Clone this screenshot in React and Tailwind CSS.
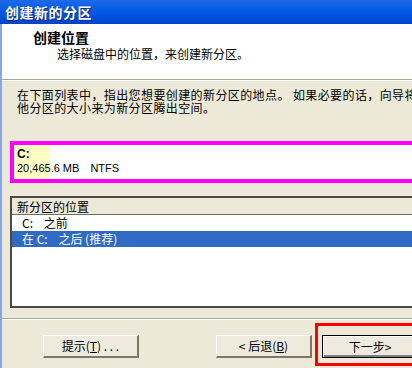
const cjk = { fontFamily: '"Noto Sans CJK SC", "Liberation Sans", sans-serif' };

const Button = ({ children, isDefault }) => (
  <div
    className={
      "w-[96px] h-[23px] flex items-center justify-center text-[12px] text-black bg-[#eeebde] " +
      (isDefault
        ? "border border-black shadow-[inset_1px_1px_0_#ffffff,inset_-2px_-2px_0_#808080]"
        : "border-t border-l border-white border-r-2 border-b-2 border-r-[#7a7868] border-b-[#7a7868]")
    }
  >
    {children}
  </div>
);

export default function App() {
  return (
    <div className="w-[412px] h-[368px] overflow-hidden bg-[#ece9d8]" style={cjk}>
      {/* title bar */}
      <div className="h-[24px] flex items-center pl-[5px] bg-gradient-to-b from-[#1d6ae8] via-[#0058e6] to-[#0042c9]">
        <span className="text-white text-[14px] font-bold leading-none tracking-[0.5px] [text-shadow:1px_1px_0_#0a2a80]">
          创建新的分区
        </span>
      </div>

      <div className="border-l-2 border-[#8aa5e6] h-[344px]">
        {/* header */}
        <div className="h-[56px] bg-white border-b border-[#aca899] shadow-[0_1px_0_#ffffff]">
          <div className="pl-[31px] pt-[5px] text-[14px] leading-[17px] font-bold text-black">创建位置</div>
          <div className="pl-[55px] text-[12px] leading-[15px] text-black">选择磁盘中的位置，来创建新分区。</div>
        </div>

        {/* body */}
        <div className="pt-[8px] text-[12px] leading-[13px] tracking-[0.4px] text-black overflow-hidden">
          <div className="pl-[15px] whitespace-nowrap">在下面列表中，指出您想要创建的新分区的地点。 如果必要的话，向导将</div>
          <div className="pl-[15px] whitespace-nowrap">他分区的大小来为新分区腾出空间。</div>
        </div>

        {/* disk map */}
        <div className="mt-[27px] ml-[8px] w-[420px] h-[42px] border-4 border-[#ff00ff] bg-white flex">
          <div className="w-[35px] h-full bg-[#ffffc4] pl-[3px] pt-[2px] whitespace-nowrap text-[11px] leading-[14px] text-black" style={{ fontFamily: '"Liberation Sans", sans-serif' }}>
            <div className="font-bold text-[12px]">C:</div>
            <div>
              20,465.6 MB<span className="ml-[11px]">NTFS</span>
            </div>
          </div>
        </div>

        {/* location list */}
        <div className="mt-[13px] ml-[8px] w-[420px] h-[112px] border-2 border-[#4a4a48] bg-white">
          <div className="h-[17px] bg-[#ece9d8] border-b border-[#6f6d62] pl-[5px] text-[12px] leading-[17px] text-black">
            新分区的位置
          </div>
          <div className="h-[16px] pl-[10px] text-[12px] leading-[16px] text-black whitespace-pre">C:    之前</div>
          <div className="h-[16px] pl-[10px] text-[12px] leading-[16px] text-white bg-[#316ac5] whitespace-pre">在 C:    之后 (推荐)</div>
        </div>

        {/* separator */}
        <div className="mt-[10px] border-t border-[#aca899] border-b border-b-white" />

        {/* buttons */}
        <div className="pt-[3px] pl-[41px] flex items-start">
          <div className="mt-[12px]">
            <div className="w-[100px]">
              <Button>
                提示(<span className="underline">T</span>) . . .
              </Button>
            </div>
          </div>
          <div className="mt-[12px] ml-[73px]">
            <Button>
              &lt; 后退(<span className="underline">B</span>)
            </Button>
          </div>
          <div className="ml-[3px] border-[3px] border-[#ff0000] pt-[9px] pl-[4px] pb-[5px] pr-[4px]">
            <Button isDefault>下一步&gt;</Button>
          </div>
        </div>
      </div>
    </div>
  );
}
